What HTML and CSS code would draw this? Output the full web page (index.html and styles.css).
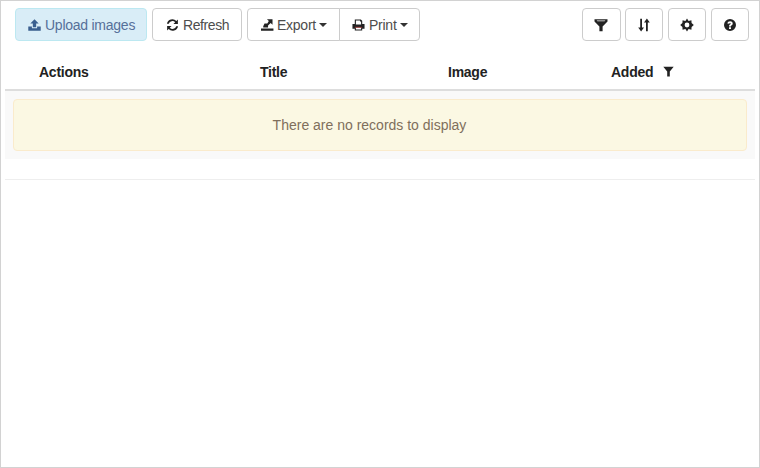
FILE: index.html
```html
<!DOCTYPE html>
<html lang="en">
<head>
<meta charset="utf-8">
<title>Images</title>
<link rel="stylesheet" href="styles.css">
</head>
<body>
<div class="frame">
  <div class="toolbar">
    <button class="btn btn-primary"><svg class="icon" viewBox="0 0 14 14"><path fill="#3a5f8f" d="M7 .8 11.5 5.4H8.8V9.4H5.2V5.4H2.5ZM.3 8.6H4.2V10.4H9.8V8.6H13.7V13.2H.3Z"/></svg>Upload images</button>
    <button class="btn btn-refresh"><svg class="icon" viewBox="0 0 14 14"><path fill="#222" d="M12.8 1V6H8L9.9 4.1A4.1 4.1 0 0 0 3 5.6H1A6 6 0 0 1 11.2 2.6ZM1.2 13V8H6L4.1 9.9A4.1 4.1 0 0 0 11 8.4H13A6 6 0 0 1 2.8 11.4Z"/></svg>Refresh</button>
    <div class="group">
      <button class="btn btn-export"><svg class="icon" viewBox="0 0 14 14"><path fill="#222" d="M0 10.8H13.4V13.2H0ZM6.4.8H12.4V6.6L10.4 4.8 7.6 7.6V9.6H2.4V8.4L3.8 5.4H6.8L8.4 2.8Z"/></svg>Export<span class="caret"></span></button>
      <button class="btn btn-print"><svg class="icon" viewBox="0 0 14 14"><path fill="#222" fill-rule="evenodd" d="M3 1H9.5L11 2.5V6H13.5V11H11V13H3V11H.5V6H3ZM4.2 2.2V6.4H9.8V3.2H8.6V2.2ZM4.2 9.8V11.8H9.8V9.8Z"/><path fill="#a33" d="M3 9h8v.8H3z"/></svg>Print<span class="caret"></span></button>
    </div>
    <div class="tools">
      <button class="btn tool"><svg class="icon-solo" viewBox="0 0 14 14"><path fill="#222" fill-rule="evenodd" d="M.5 1.2H13.5V3.6L8.6 8.4V13.2L5.4 13.2V8.4L.5 3.6ZM2.6 2.4 3.4 3.2H10.6L11.4 2.4Z"/></svg></button>
      <button class="btn tool"><svg class="icon-solo" viewBox="0 0 14 14"><path fill="#222" d="M3.2 .8H5V9.5H7L4.1 13.4 1.2 9.5H3.2ZM9.9.6 12.8 4.5H10.8V13.2H9V4.5H7Z"/></svg></button>
      <button class="btn tool"><svg class="icon-solo" viewBox="0 0 14 14"><path fill="#222" fill-rule="evenodd" d="M7 .4 8.6 2.9 11.4 2.3 11.6 5 13.8 7 11.6 9 11.4 11.7 8.6 11.1 7 13.6 5.4 11.1 2.6 11.7 2.4 9 .2 7 2.4 5 2.6 2.3 5.4 2.9ZM7 4.6A2.4 2.4 0 1 0 7 9.4 2.4 2.4 0 1 0 7 4.6Z"/></svg></button>
      <button class="btn tool"><svg class="icon-solo" viewBox="0 0 14 14"><path fill="#222" fill-rule="evenodd" d="M7 1A6 6 0 1 0 7 13 6 6 0 1 0 7 1ZM6 9.2H8V11H6ZM4.4 5.4C4.6 4 5.6 3.2 7.1 3.2 8.6 3.2 9.7 4.1 9.7 5.4 9.7 6.5 9 7 8.5 7.3 8.1 7.6 8 7.8 8 8.4H6C6 7.3 6.4 6.8 7 6.4 7.4 6.1 7.7 5.9 7.7 5.5 7.7 5.1 7.4 4.9 7 4.9 6.6 4.9 6.3 5.2 6.2 5.7Z"/></svg></button>
    </div>
  </div>
  <div class="table-head">
    <div class="th">Actions</div>
    <div class="th">Title</div>
    <div class="th">Image</div>
    <div class="th th-added">Added<svg class="sort-filter" viewBox="0 0 11 11"><path fill="#222" d="M.3.8H10.7L6.8 5.4V10.4H4.2V5.4Z"/></svg></div>
  </div>
  <div class="table-body">
    <div class="empty">There are no records to display</div>
  </div>
  <div class="table-foot"></div>
</div>
</body>
</html>
```

FILE: styles.css
```css
* { box-sizing: border-box; }
html, body { margin: 0; padding: 0; background: #fff; }
body { font-family: "Liberation Sans", Arial, sans-serif; font-size: 14px; color: #333; }
.frame {
  width: 760px;
  height: 468px;
  border: 1px solid #d2d2d2;
  padding: 7px 4px 0;
}
.toolbar { display: flex; align-items: flex-start; padding: 0 6px 0 10px; gap: 5px; }
.btn {
  display: inline-flex;
  align-items: center;
  justify-content: flex-start;
  height: 33px;
  padding: 0 0 0 13px;
  background: #fff;
  border: 1px solid #ccc;
  border-radius: 4px;
  font: inherit;
  color: #4d4d4d;
  white-space: nowrap;
  letter-spacing: -.25px;
}
.btn-primary { width: 132px; padding-left: 12px; background: #d9edf7; border-color: #bce8f1; color: #56709a; }
.btn-refresh { width: 90px; letter-spacing: -.4px; }
.icon { width: 13px; height: 14px; margin-right: 4px; flex: none; }
.icon-solo { width: 14px; height: 14px; }
.group { display: flex; }
.btn-export { width: 93px; border-radius: 4px 0 0 4px; }
.btn-export .icon { margin-right: 3px; }
.btn-print { width: 81px; margin-left: -1px; padding-left: 12px; border-radius: 0 4px 4px 0; }
.caret {
  width: 0;
  height: 0;
  margin-left: 3px;
  border-top: 4px solid #333;
  border-left: 4px solid transparent;
  border-right: 4px solid transparent;
}
.tools { display: flex; gap: 4.4px; margin-left: auto; }
.tool { padding: 0; width: 38.4px; justify-content: center; }
.table-head {
  display: grid;
  grid-template-columns: 221px 188px 163px 1fr;
  align-items: center;
  height: 50px;
  padding-left: 34px;
  padding-top: 13px;
  border-bottom: 2px solid #ddd;
}
.th { font-weight: 700; color: #222; letter-spacing: -.25px; }
.th-added { display: flex; align-items: center; }
.sort-filter { width: 11px; height: 11px; margin-left: 10px; }
.table-body { background: #f9f9f9; padding: 8px; height: 68px; }
.empty {
  height: 52px;
  display: flex;
  align-items: center;
  justify-content: center;
  padding-right: 21px;
  background: #fbf8e3;
  border: 1px solid #faebcc;
  border-radius: 4px;
  color: #7f6f5c;
}
.table-foot { height: 21px; border-bottom: 1px solid #eee; }
```
